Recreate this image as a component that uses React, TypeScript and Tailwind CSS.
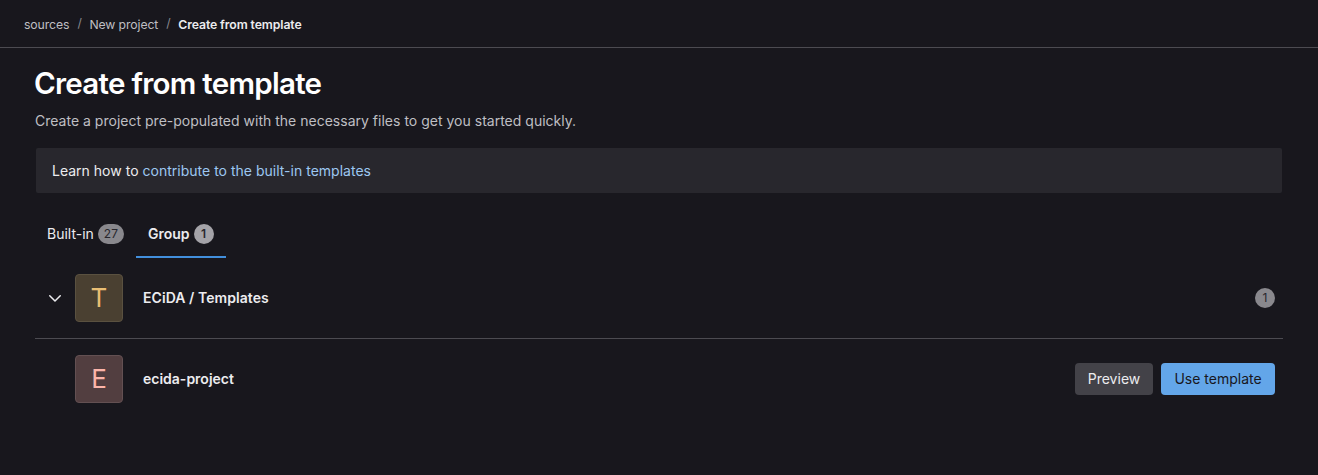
import React from 'react';

interface BadgeProps {
  count: number;
  className?: string;
}

function Badge({ count, className = '' }: BadgeProps) {
  return (
    <span className={`inline-flex h-5 min-w-5 items-center justify-center rounded-full px-1.5 text-xs text-[#28272d] ${className}`}>
      {count}
    </span>
  );
}

export default function App() {
  return (
    <div className="min-h-screen bg-[#18171d] font-['Inter',sans-serif] text-sm text-[#ececef]">
      {/* Breadcrumbs */}
      <nav className="flex h-12 items-center border-b border-[#4c4b51] pt-[3px] pl-6 text-[12.25px] tracking-[-0.1px] text-[#bfbfc3]">
        <a href="#">sources</a>
        <span className="mx-2 -mt-1 w-1 text-center text-[#89888d]">/</span>
        <a href="#">New project</a>
        <span className="mx-2 -mt-1 w-1 text-center text-[#89888d]">/</span>
        <span className="font-semibold text-[#ececef]">Create from template</span>
      </nav>

      <main className="px-[35px]">
        <h1 className="mt-[19px] -ml-px text-[29.5px] leading-8 font-semibold tracking-[-0.72px] text-white">Create from template</h1>
        <p className="mt-3 leading-5 tracking-[0.01px] text-[#bfbfc3]">
          Create a project pre-populated with the necessary files to get you started quickly.
        </p>

        <div className="mx-px mt-[17px] flex h-[45px] items-center rounded-xs bg-[#28272d] px-4">
          <span className="tracking-[0.01px]">
            Learn how to <a href="#" className="text-[#9dc7f1]">contribute to the built-in templates</a>
          </span>
        </div>

        {/* Tabs */}
        <div className="mt-[17px] flex h-12">
          <button className="flex items-center gap-1 px-3">
            Built-in <Badge count={27} className="bg-[#89888d]" />
          </button>
          <button className="flex items-center gap-1 border-b-2 border-[#428fdc] px-3 pt-0.5 font-semibold">
            Group <Badge count={1} className="bg-[#a4a3a8]" />
          </button>
        </div>

        {/* Group row */}
        <div className="flex h-[81px] items-center border-b border-[#4c4b51] pr-2 pl-3">
          <svg className="mr-3 size-4" viewBox="0 0 16 16" fill="none" stroke="currentColor" strokeWidth="1.5" strokeLinecap="round" strokeLinejoin="round">
            <path d="M2.75 5.75L8 11l5.25-5.25" />
          </svg>
          <div className="flex size-12 items-center justify-center rounded border border-[#5a5140] bg-[#4a4031] text-[26px] text-[#e9be74]">T</div>
          <span className="ml-5 font-semibold tracking-[0.06px]">ECiDA / Templates</span>
          <Badge count={1} className="ml-auto bg-[#89888d]" />
        </div>

        {/* Project row */}
        <div className="flex h-20 items-center pr-2 pl-10">
          <div className="flex size-12 items-center justify-center rounded border border-[#635052] bg-[#523e40] text-[26px] text-[#fcb5aa]">E</div>
          <span className="ml-5 font-semibold">ecida-project</span>
          <button className="ml-auto h-8 w-[78px] rounded bg-[#434248]">Preview</button>
          <button className="ml-2 h-8 w-[114px] rounded bg-[#63a6e9] text-[#18171d]">Use template</button>
        </div>
      </main>
    </div>
  );
}
